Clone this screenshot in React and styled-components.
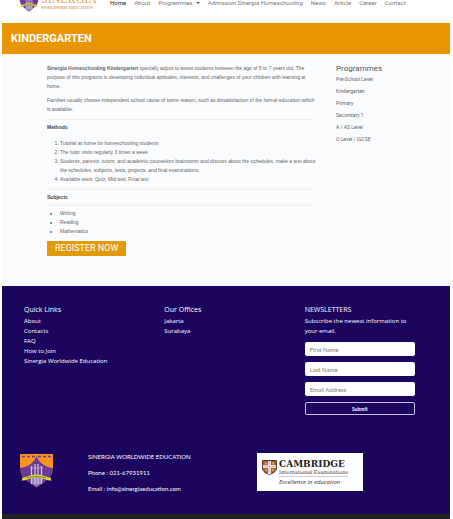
import React from 'react'
import styled, { createGlobalStyle } from 'styled-components'

const navItems = [
  { name: 'Home', active: true },
  { name: 'About' },
  { name: 'Programmes', menu: true },
  { name: 'Admission Sinergia Homeschooling' },
  { name: 'News' },
  { name: 'Article' },
  { name: 'Career' },
  { name: 'Contact' },
]

const programmes = [
  'Pre-School Level',
  'Kindergarten',
  'Primary',
  'Secondary 1',
  'A / AS Level',
  'O Level / IGCSE',
]

const quickLinks = [
  'About',
  'Contacts',
  'FAQ',
  'How to Join',
  'Sinergia Worldwide Education',
]

const offices = ['Jakarta', 'Surabaya']

const fields = [
  { label: 'First Name', type: 'text' },
  { label: 'Last Name', type: 'text' },
  { label: 'Email Address', type: 'email' },
]

const GlobalStyle = createGlobalStyle`
  * {
    box-sizing: border-box;
  }
  body {
    margin: 0;
    background-color: #ffffff;
    font-family: Roboto, 'Liberation Sans', sans-serif;
  }
  a {
    color: inherit;
    text-decoration: none;
  }
`

const Page = styled.div`
  margin: 0 3px 0 2px;
  overflow: hidden;
`

const Header = styled.header`
  display: flex;
  align-items: flex-end;
  height: 23px;
  padding: 0 17px 11px;
  overflow: hidden;
`

const Brand = styled.a`
  display: flex;
  align-items: flex-end;
  gap: 2px;
  width: 91px;
  flex-shrink: 0;
`

const BrandText = styled.span`
  display: flex;
  flex-direction: column;
  padding-bottom: 2px;
  font-family: 'Liberation Serif', serif;
  color: #e59a52;
  white-space: nowrap;
`

const BrandName = styled.span`
  font-size: 12px;
  line-height: 12px;
`

const BrandTagline = styled.span`
  font-size: 4px;
  font-weight: bold;
  line-height: 5px;
`

const Nav = styled.nav`
  display: flex;
  gap: 8px;
  padding-bottom: 5px;
  font-family: Roboto, sans-serif;
  font-size: 6px;
  line-height: 8px;
  white-space: nowrap;
`

const NavLink = styled.a`
  display: flex;
  align-items: center;
  gap: 3px;
  color: ${props => (props.$active ? '#222222' : '#777777')};
`

const Caret = styled.span`
  border: 2px solid transparent;
  border-top-color: #555555;
  border-bottom: 0;
`

const Banner = styled.div`
  padding: 8px 9px;
  background-color: #e99500;
`

const BannerTitle = styled.h1`
  margin: 0;
  font-family: Roboto, sans-serif;
  font-size: 11px;
  font-weight: bold;
  line-height: 15px;
  color: #ffffff;
`

const Content = styled.div`
  display: flex;
  gap: 24px;
  padding: 10px 11px 30px 45px;
  background-color: #fafbfd;
`

const Article = styled.main`
  flex: 1;
  min-width: 0;
  font-family: 'Liberation Sans', sans-serif;
  font-size: 5px;
  line-height: 9px;
  color: #666666;
  white-space: nowrap;
`

const Paragraph = styled.p`
  margin: 0 0 5px;
`

const SectionTitle = styled.h2`
  margin: 0;
  padding: 3px 0;
  border-top: 1px solid #e9ebee;
  border-bottom: 1px solid ${props => (props.$underline ? '#e9ebee' : 'transparent')};
  font-size: 5px;
  font-weight: bold;
  line-height: 9px;
  color: #444444;
`

const List = styled.ul`
  margin: 0;
  padding: 3px 0 5px 13px;
`

const RegisterButton = styled.button`
  display: block;
  padding: 0 8px;
  border: 0;
  background-color: #e09a0c;
  font-family: Roboto, sans-serif;
  font-size: 9px;
  line-height: 15px;
  color: #ffffff;
`

const Sidebar = styled.aside`
  width: 103px;
  color: #666666;
`

const SidebarTitle = styled.h2`
  margin: 0;
  font-size: 8px;
  font-weight: normal;
  line-height: 9px;
  color: #555555;
`

const PlainList = styled.ul`
  margin: 0;
  padding: 0;
  list-style: none;
  font-size: ${props => props.$size};
  line-height: ${props => props.$line};
`

const Footer = styled.footer`
  background-color: #1b055f;
  border-bottom: 5px solid #222222;
  font-family: 'Open Sans', sans-serif;
  color: #ffffff;
`

const FooterColumns = styled.div`
  display: grid;
  grid-template-columns: repeat(3, 1fr);
  padding: 18px 5px 38px 22px;
`

const FooterTitle = styled.h2`
  margin: 0 0 1px;
  font-size: 7px;
  font-weight: normal;
  line-height: 11px;
`

const Newsletter = styled.form`
  display: flex;
  flex-direction: column;
  gap: 6px;
  padding-right: 30px;
`

const NewsletterText = styled.p`
  margin: 0;
  font-size: 6px;
  line-height: 10px;
`

const Field = styled.input`
  display: block;
  width: 100%;
  height: 14px;
  padding: 0 5px;
  border: 0;
  border-radius: 2px;
  background-color: #ffffff;
  font-family: Lato, sans-serif;
  font-size: 6px;
  color: #444444;
  &::placeholder {
    color: #777777;
    opacity: 1;
  }
`

const SubmitButton = styled.button`
  height: 13px;
  padding: 0;
  border: 1px solid #c9c3dc;
  border-radius: 2px;
  background-color: transparent;
  font-family: Lato, sans-serif;
  font-size: 5px;
  font-weight: bold;
  color: #ffffff;
`

const FooterBottom = styled.div`
  display: flex;
  align-items: flex-start;
  padding: 0 17px 21px;
`

const Address = styled.address`
  flex: 1;
  padding-left: 34px;
  font-family: Lato, sans-serif;
  font-size: 6px;
  font-style: normal;
  line-height: 8px;
  white-space: nowrap;
`

const AddressLine = styled.p`
  margin: 0 0 8px;
  &:last-child {
    margin: 0;
  }
`

const Partner = styled.div`
  display: flex;
  gap: 2px;
  width: 106px;
  height: 38px;
  margin-right: 70px;
  padding: 7px 5px;
  background-color: #ffffff;
  color: #333333;
  white-space: nowrap;
`

const PartnerText = styled.div`
  display: flex;
  flex-direction: column;
`

const PartnerName = styled.strong`
  font-family: 'DejaVu Serif', serif;
  font-size: 9px;
  line-height: 9px;
  color: #222222;
`

const PartnerUnit = styled.span`
  padding-bottom: 1px;
  border-bottom: 1px solid #cccccc;
  font-family: 'DejaVu Serif', serif;
  font-size: 5px;
  line-height: 6px;
`

const PartnerMotto = styled.em`
  padding-top: 1px;
  font-family: 'Open Sans', sans-serif;
  font-size: 6px;
  line-height: 8px;
`

const Shield = ({ width, height }) => (
  <svg width={width} height={height} viewBox="0 0 35 35" preserveAspectRatio="none" aria-hidden="true">
    <path d="M1 1h33v15c0 9-8 13-16.500 18.500C9 29 1 25 1 16z" fill="#6d3b96" />
    <path d="M12 25h12l-1 5-5.500 4-5.500-4z" fill="#9583b5" />
    <path d="M1 1h33v14c-8-1-14-5-16.500-12C15 10 9 14 1 15z" fill="#f7931e" />
    <path d="M3 3.500h3M8 3.500h3M13 3.500h3M19 3.500h3M24 3.500h3M29 3.500h3" stroke="#6d3b96" strokeWidth="1.500" />
    <path d="M12.500 13v18M16 11v20M19 11v20M22.500 13v18" stroke="#d4c6e2" strokeWidth="1.200" />
    <path d="M11 15h13" stroke="#b59fcb" strokeWidth="1" />
    <path d="M3 26c4 1 7-3 14.500-3S28 27 32 26" fill="none" stroke="#d6d833" strokeWidth="3" />
    <path d="M8 25c6-2 13-2 19 0" fill="none" stroke="#6b6b2c" strokeWidth="0.800" />
  </svg>
)

const Crest = () => (
  <svg width="15" height="15" viewBox="0 0 15 15" aria-hidden="true">
    <path d="M.5 .5h14v8c0 3-4 5-7 6-3-1-7-3-7-6z" fill="#b5603a" stroke="#4b3a38" />
    <path d="M7.500 1v13M1 6.500h13" stroke="#ffffff" strokeWidth="2.500" />
    <path d="M7.500 1v12M1 6.500h13" stroke="#d98f8f" strokeWidth="0.600" />
    <circle cx="4" cy="3.500" r="1" fill="#e2b34b" />
    <circle cx="11" cy="3.500" r="1" fill="#e2b34b" />
    <circle cx="4" cy="10" r="1" fill="#e2b34b" />
    <circle cx="11" cy="10" r="1" fill="#e2b34b" />
  </svg>
)

const TopBar = () => (
  <Header>
    <Brand href="#">
      <Shield width={20} height={24} />
      <BrandText>
        <BrandName>SINERGIA</BrandName>
        <BrandTagline>WORLDWIDE EDUCATION</BrandTagline>
      </BrandText>
    </Brand>
    <Nav>
      {navItems.map(item => (
        <NavLink key={item.name} href="#" $active={item.active}>
          {item.name}
          {item.menu && <Caret />}
        </NavLink>
      ))}
    </Nav>
  </Header>
)

const LinkList = ({ items, size, line }) => (
  <PlainList $size={size} $line={line}>
    {items.map(item => (
      <li key={item}>
        <a href="#">{item}</a>
      </li>
    ))}
  </PlainList>
)

const Kindergarten = () => (
  <Article>
    <Paragraph>
      <b>Sinergia Homeschooling Kindergarten</b> specially adjust to assist students between the age of 5 to 7 years old. The
      <br />
      purpose of this programs is developing individual aptitudes, interests, and challenges of your children with learning at
      <br />
      home.
    </Paragraph>
    <Paragraph>
      Families usually choose independent school cause of some reason, such as dissatisfaction of the formal education which
      <br />
      is available.
    </Paragraph>
    <SectionTitle>Methods</SectionTitle>
    <List as="ol">
      <li>Tutorial at home for homeschooling students</li>
      <li>The tutor visits regularly 3 times a week</li>
      <li>
        Students, parents, tutors, and academic counselors brainstorm and discuss about the schedules, make a test about
        <br />
        the schedules, subjects, tests, projects, and final examinations.
      </li>
      <li>Available tests: Quiz, Mid test, Final test</li>
    </List>
    <SectionTitle $underline>Subjects</SectionTitle>
    <List>
      <li>Writing</li>
      <li>Reading</li>
      <li>Mathematics</li>
    </List>
    <RegisterButton type="button">REGISTER NOW</RegisterButton>
  </Article>
)

const SiteFooter = () => (
  <Footer>
    <FooterColumns>
      <div>
        <FooterTitle>Quick Links</FooterTitle>
        <LinkList items={quickLinks} size="6px" line="10px" />
      </div>
      <div>
        <FooterTitle>Our Offices</FooterTitle>
        <LinkList items={offices} size="6px" line="10px" />
      </div>
      <div>
        <FooterTitle>NEWSLETTERS</FooterTitle>
        <Newsletter>
          <NewsletterText>Subscribe the newest information to your email.</NewsletterText>
          {fields.map(field => (
            <Field key={field.label} type={field.type} placeholder={field.label} aria-label={field.label} />
          ))}
          <SubmitButton type="button">Submit</SubmitButton>
        </Newsletter>
      </div>
    </FooterColumns>
    <FooterBottom>
      <Shield width={35} height={35} />
      <Address>
        <AddressLine>SINERGIA WORLDWIDE EDUCATION</AddressLine>
        <AddressLine>Phone : 021-67931911</AddressLine>
        <AddressLine>Email : info@sinergiaeducation.com</AddressLine>
      </Address>
      <Partner>
        <Crest />
        <PartnerText>
          <PartnerName>CAMBRIDGE</PartnerName>
          <PartnerUnit>International Examinations</PartnerUnit>
          <PartnerMotto>Excellence in education</PartnerMotto>
        </PartnerText>
      </Partner>
    </FooterBottom>
  </Footer>
)

const App = () => (
  <>
    <GlobalStyle />
    <Page>
      <TopBar />
      <Banner>
        <BannerTitle>KINDERGARTEN</BannerTitle>
      </Banner>
      <Content>
        <Kindergarten />
        <Sidebar>
          <SidebarTitle>Programmes</SidebarTitle>
          <LinkList items={programmes} size="5px" line="12px" />
        </Sidebar>
      </Content>
      <SiteFooter />
    </Page>
  </>
)

export default App
